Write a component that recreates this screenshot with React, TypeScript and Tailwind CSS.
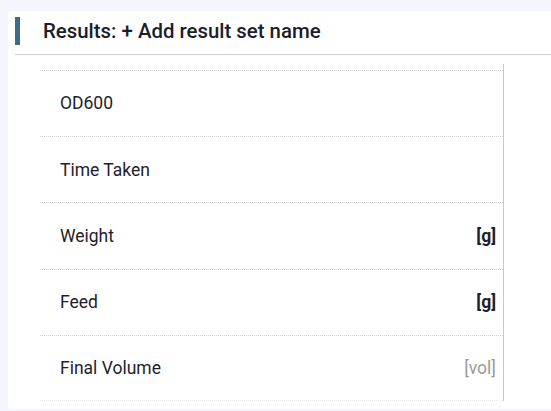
import React from "react";

const rows: { label: string; unit?: string; unitStyle?: "bold" | "muted" }[] = [
  { label: "OD600" },
  { label: "Time Taken" },
  { label: "Weight", unit: "[g]", unitStyle: "bold" },
  { label: "Feed", unit: "[g]", unitStyle: "bold" },
  { label: "Final Volume", unit: "[vol]", unitStyle: "muted" },
];

export default function App() {
  return (
    <div className="w-[551px] h-[411px] overflow-hidden bg-[#f5f5fd] pt-[11px] pl-[8px]" style={{ fontFamily: "Roboto, 'Liberation Sans', sans-serif" }}>
      <div className="w-[600px] h-[398px] bg-white rounded-[4px] pl-[7px] pt-[6px]">
        <div className="flex items-center h-[28px]">
          <div className="w-[5px] h-[28px] bg-[#3e6a8e]" />
          <div className="ml-[23px] text-[20.4px] font-medium text-[#1c1c2a] leading-none">Results: + Add result set name</div>
        </div>
        <div className="mt-[9px] h-px bg-[#c9ccd2]" />
        <div className="ml-[25px] mt-[9px] w-[464px] border-r border-[#c8c8d0] pt-[6px]">
          {rows.map((r, i) => (
            <div
              key={r.label}
              className={`flex items-center justify-between h-[66.2px] border-t border-dotted border-t-[#d2d2d2] pl-[20px] pr-[7px] ${i === rows.length - 1 ? "border-b border-b-[#e6e6e6]" : ""}`}
            >
              <span className="text-[17.5px] text-[#1e1e2c]">{r.label}</span>
              {r.unit && (
                <span className={r.unitStyle === "bold" ? "text-[17.5px] font-bold text-[#1e1e2c]" : "text-[17.5px] text-[#9a9a9a]"}>{r.unit}</span>
              )}
            </div>
          ))}
        </div>
      </div>
    </div>
  );
}
